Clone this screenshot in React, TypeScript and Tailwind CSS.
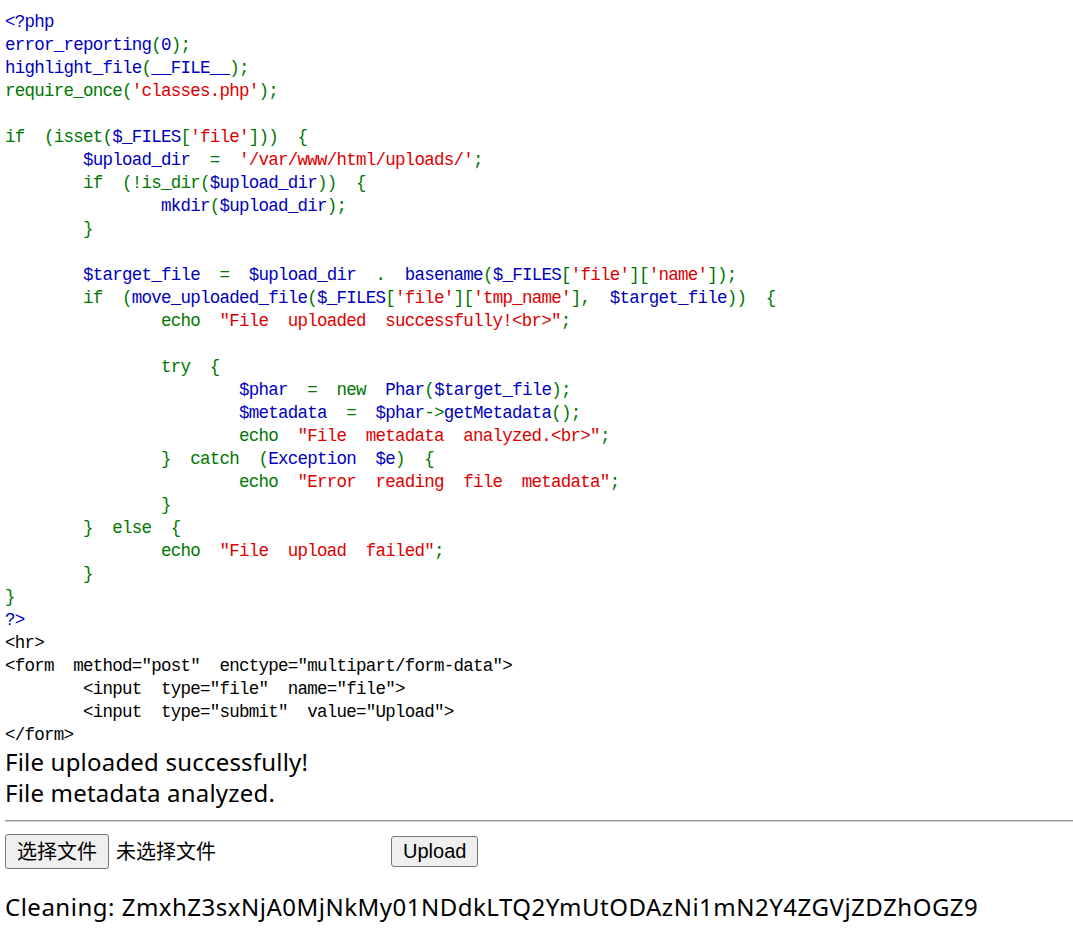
type Tone = 'b' | 'g' | 'r' | 'k';
type Tok = [Tone, string];

const tone: Record<Tone, string> = {
  b: 'text-[#0000BB]',
  g: 'text-[#007700]',
  r: 'text-[#DD0000]',
  k: 'text-black',
};

const T = '        ';

// highlight_file() output, one array per line
const source: Tok[][] = [
  [['b', '<?php']],
  [['b', 'error_reporting'], ['g', '('], ['b', '0'], ['g', ');']],
  [['b', 'highlight_file'], ['g', '('], ['b', '__FILE__'], ['g', ');']],
  [['g', 'require_once('], ['r', "'classes.php'"], ['g', ');']],
  [],
  [['g', 'if  (isset('], ['b', '$_FILES'], ['g', '['], ['r', "'file'"], ['g', ']))  {']],
  [['g', T], ['b', '$upload_dir'], ['g', '  =  '], ['r', "'/var/www/html/uploads/'"], ['g', ';']],
  [['g', T + 'if  (!is_dir('], ['b', '$upload_dir'], ['g', '))  {']],
  [['g', T + T], ['b', 'mkdir'], ['g', '('], ['b', '$upload_dir'], ['g', ');']],
  [['g', T + '}']],
  [],
  [
    ['g', T],
    ['b', '$target_file'],
    ['g', '  =  '],
    ['b', '$upload_dir'],
    ['g', '  .  '],
    ['b', 'basename'],
    ['g', '('],
    ['b', '$_FILES'],
    ['g', '['],
    ['r', "'file'"],
    ['g', ']['],
    ['r', "'name'"],
    ['g', ']);'],
  ],
  [
    ['g', T + 'if  ('],
    ['b', 'move_uploaded_file'],
    ['g', '('],
    ['b', '$_FILES'],
    ['g', '['],
    ['r', "'file'"],
    ['g', ']['],
    ['r', "'tmp_name'"],
    ['g', '],  '],
    ['b', '$target_file'],
    ['g', '))  {'],
  ],
  [['g', T + T + 'echo  '], ['r', '"File  uploaded  successfully!<br>"'], ['g', ';']],
  [],
  [['g', T + T + 'try  {']],
  [['g', T + T + T], ['b', '$phar'], ['g', '  =  new  '], ['b', 'Phar'], ['g', '('], ['b', '$target_file'], ['g', ');']],
  [['g', T + T + T], ['b', '$metadata'], ['g', '  =  '], ['b', '$phar'], ['g', '->'], ['b', 'getMetadata'], ['g', '();']],
  [['g', T + T + T + 'echo  '], ['r', '"File  metadata  analyzed.<br>"'], ['g', ';']],
  [['g', T + T + '}  catch  ('], ['b', 'Exception  $e'], ['g', ')  {']],
  [['g', T + T + T + 'echo  '], ['r', '"Error  reading  file  metadata"'], ['g', ';']],
  [['g', T + T + '}']],
  [['g', T + '}  else  {']],
  [['g', T + T + 'echo  '], ['r', '"File  upload  failed"'], ['g', ';']],
  [['g', T + '}']],
  [['g', '}']],
  [['b', '?>']],
  [['k', '<hr>']],
  [['k', '<form  method="post"  enctype="multipart/form-data">']],
  [['k', T + '<input  type="file"  name="file">']],
  [['k', T + '<input  type="submit"  value="Upload">']],
  [['k', '</form>']],
];

function CodeBlock() {
  return (
    <code className="block whitespace-pre font-['Liberation_Mono',monospace] text-[17.5px] leading-[23px] tracking-[-0.75px]">
      {source.map((line, i) => (
        <div key={i} className="h-[23px]">
          {line.map(([c, text], j) => (
            <span key={j} className={tone[c]}>
              {text}
            </span>
          ))}
        </div>
      ))}
    </code>
  );
}

function UploadForm() {
  return (
    <div className="mt-[12px] flex items-center">
      <div className="flex w-[380px] items-center">
        <button className="h-[35px] rounded-[3px] border border-[#767676] bg-[#efefef] px-[11px] font-['Noto_Sans_CJK_SC',sans-serif] text-[20px] leading-none text-black">
          选择文件
        </button>
        <span className="ml-[7px] font-['Noto_Sans_CJK_SC',sans-serif] text-[20px] text-black">
          未选择文件
        </span>
      </div>
      <button className="ml-[6px] h-[31px] rounded-[3px] border border-[#767676] bg-[#efefef] px-[11px] font-['Liberation_Sans',Arial,sans-serif] text-[20px] leading-none text-black">
        Upload
      </button>
    </div>
  );
}

export default function App() {
  return (
    <div className="min-h-screen bg-white pl-[5px] pt-[10.5px] text-black">
      <CodeBlock />

      <div className="-mt-px font-['Noto_Sans','Noto_Sans_CJK_SC',sans-serif] text-[24px] leading-[31px] tracking-[0.2px]">
        <div>File uploaded successfully!</div>
        <div>File metadata analyzed.</div>
      </div>

      <div className="mt-[12px] border-t border-b border-t-[#999999] border-b-[#d0d0d0]" />

      <UploadForm />

      <div className="mt-[22.5px] font-['Noto_Sans','Noto_Sans_CJK_SC',sans-serif] text-[24px] leading-[31px] tracking-[0.5px]">
        Cleaning: ZmxhZ3sxNjA0MjNkMy01NDdkLTQ2YmUtODAzNi1mN2Y4ZGVjZDZhOGZ9
      </div>
    </div>
  );
}
